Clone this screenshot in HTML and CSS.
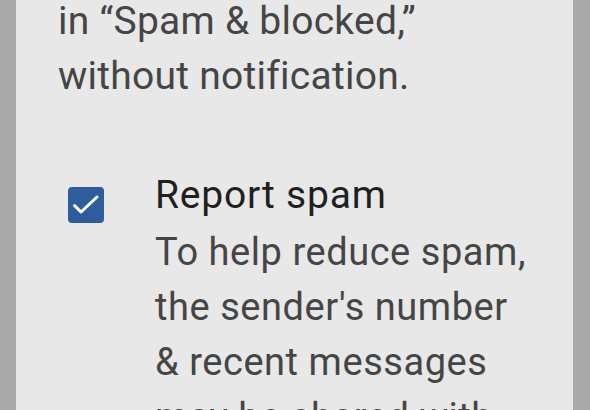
FILE: index.html
```html
<!DOCTYPE html>
<html>
<head>
<meta charset="utf-8">
<link rel="stylesheet" href="styles.css">
</head>
<body>
<div class="panel">
  <p class="intro">in “Spam &amp; blocked,”<br>without notification.</p>
  <div class="option">
    <div class="check">
      <svg viewBox="0 0 36 36" width="36" height="36"><path d="M6.5 18.5l6.5 6.5L29 10" fill="none" stroke="#fff" stroke-width="3" stroke-linecap="round" stroke-linejoin="round"/></svg>
    </div>
    <div class="option-text">
      <div class="title">Report spam</div>
      <div class="desc">To help reduce spam,<br>the sender's number<br>&amp; recent messages<br>may be shared with</div>
    </div>
  </div>
</div>
</body>
</html>
```
FILE: styles.css
```css
html, body {
  margin: 0;
  padding: 0;
  height: 410px;
  overflow: hidden;
  background: #a9a9a9;
}
.panel {
  margin-left: 16px;
  width: 557px;
  height: 410px;
  background: #e8e8e8;
  font-family: Roboto, "Noto Sans", sans-serif;
  overflow: hidden;
}
.intro {
  margin: -6px 0 0 0;
  padding-left: 42px;
  font-size: 39px;
  line-height: 55px;
  letter-spacing: 0.25px;
  color: #454545;
}
.option {
  display: flex;
  margin-top: 64px;
  padding-left: 52px;
}
.check {
  width: 36px;
  height: 36px;
  border-radius: 4px;
  background: #2f5d9c;
  margin-top: 19px;
  flex: none;
}
.check svg {
  display: block;
}
.option-text {
  margin-left: 51px;
}
.title {
  font-size: 39px;
  line-height: 55px;
  letter-spacing: 0.8px;
  color: #1f1f1f;
}
.desc {
  margin-top: 2px;
  font-size: 38px;
  line-height: 55px;
  letter-spacing: 0.55px;
  color: #454545;
}
```
